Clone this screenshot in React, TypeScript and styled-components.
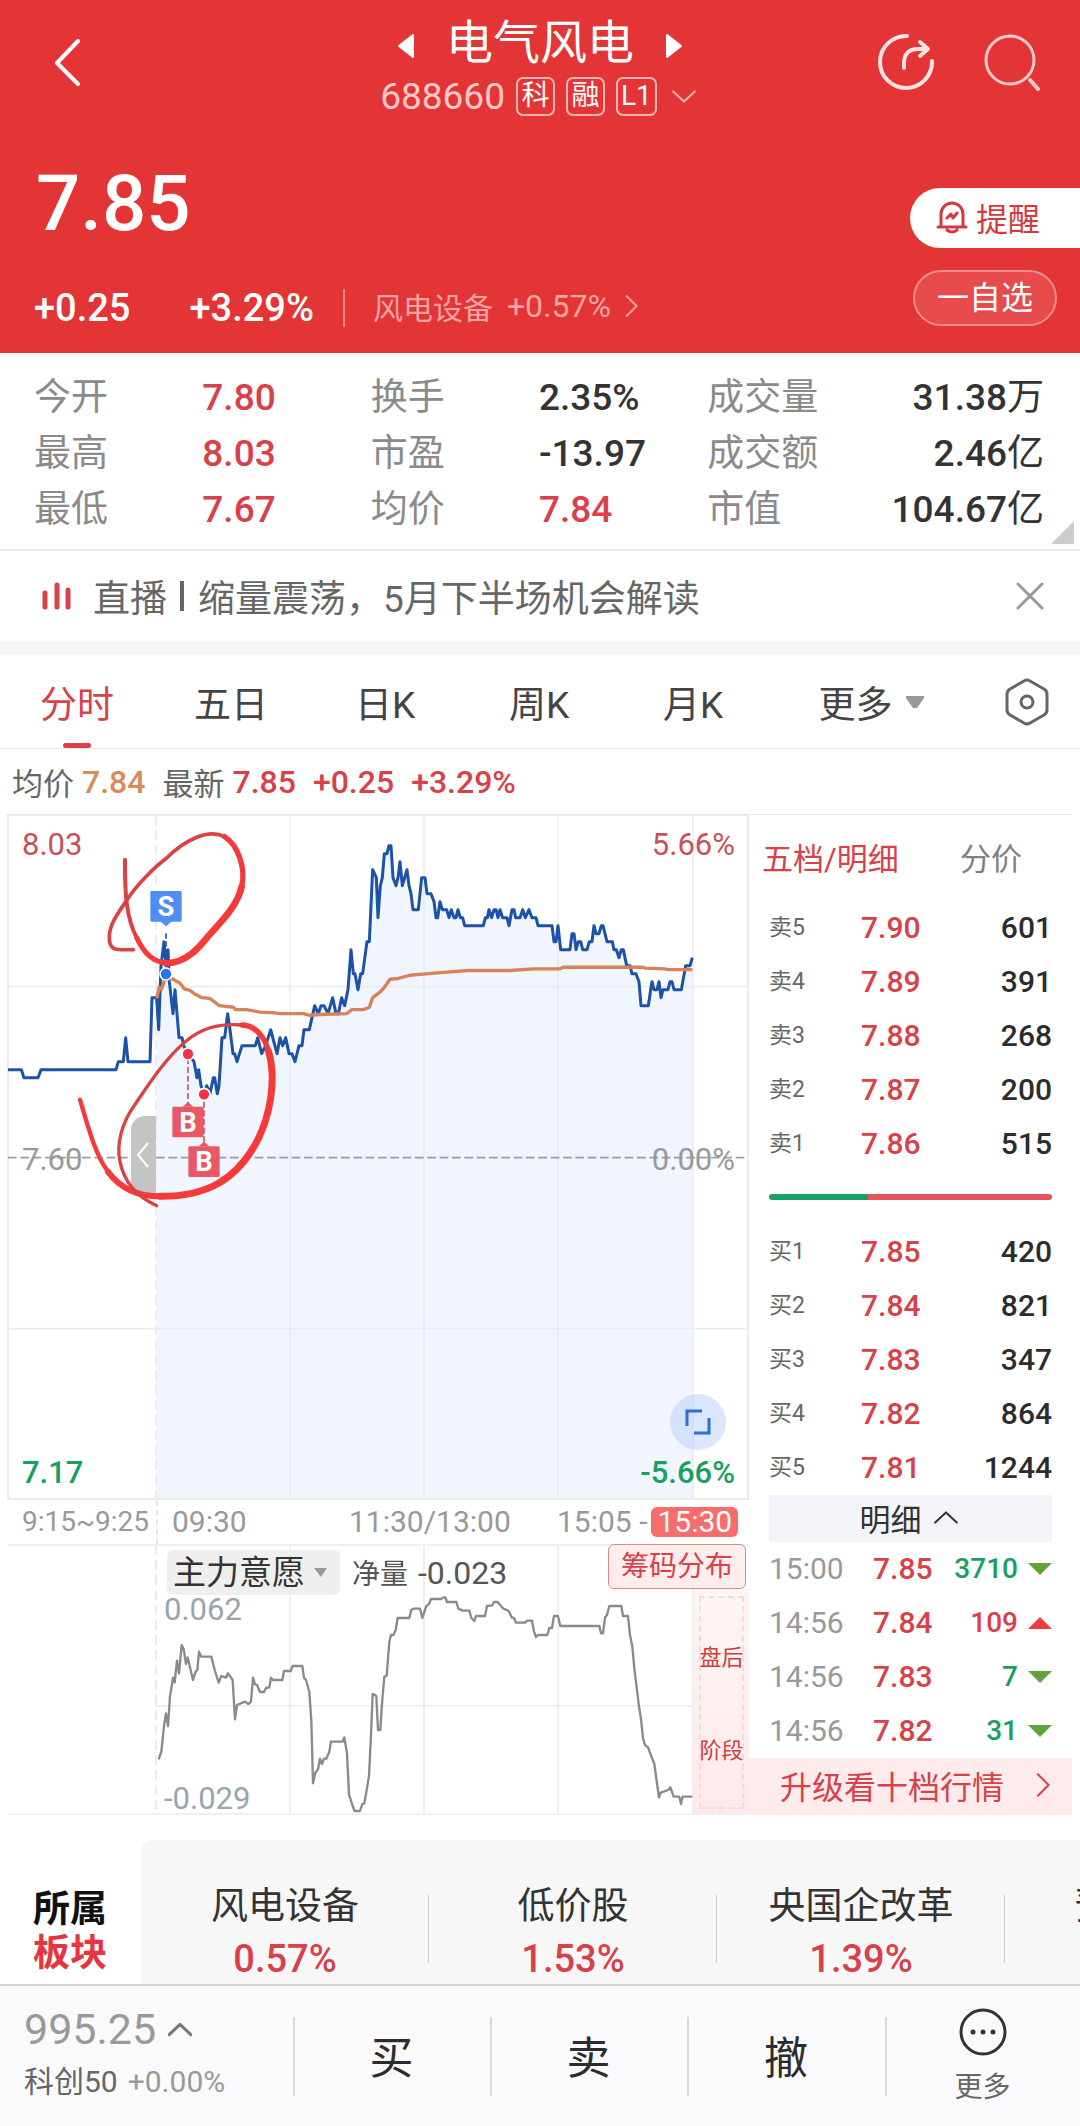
import React, { useState } from "react";
import styled, { createGlobalStyle } from "styled-components";

const RED = "#d8404a";
const GREEN = "#18a062";
const CJK = `"Noto Sans CJK SC", sans-serif`;

const Global = createGlobalStyle`
  *, *::before, *::after { box-sizing: border-box; }
  body { margin: 0; background: #fff; color: #333; font-family: Roboto, ${CJK}; }
  button, select { font: inherit; color: inherit; border: 0; background: none; padding: 0; margin: 0; }
  svg { display: block; flex: none; }
  dl, dt, dd, p, h1 { margin: 0; font-weight: 400; }
`;

/* price samples: [x, ticks above previous close], three units per pixel */
const PRICE: number[][] = [
  [0,11],[40,11],[48,10],[90,10],[99,11],[324,11],[331,12],[346,12],[353,15],[360,12],[426,12],[432,20],[446,20],
  [452,16],[459,24],[468,27],[474,24],[480,26],[484,22],[495,18],[501,21],[513,15],[522,15],[527,14],[540,13],[558,12],
  [567,10],[572,11],[579,9],[588,8],[596,9],[606,8],[616,10],[620,10],[628,8],[633,9],[642,15],[650,15],[659,18],[666,16],
  [675,13],[680,13],[687,12],[702,14],[742,14],[749,15],[761,13],[773,14],[788,16],[807,13],[816,15],[824,14],[833,15],
  [843,13],[852,13],[861,12],[873,14],[882,14],[888,16],[904,16],[920,19],[931,18],[939,19],[948,19],[960,18],[974,20],
  [984,18],[991,18],[1001,20],[1010,19],[1020,21],[1029,26],[1036,23],[1041,23],[1050,21],[1058,23],[1064,23],[1077,27],
  [1084,27],[1094,36],[1105,35],[1110,30],[1117,34],[1123,35],[1129,38],[1137,38],[1143,39],[1149,39],[1155,35],[1164,34],
  [1170,35],[1176,37],[1183,34],[1197,36],[1203,34],[1209,33],[1215,31],[1231,31],[1241,35],[1251,35],[1257,33],[1269,33],
  [1278,32],[1284,30],[1289,30],[1296,32],[1303,31],[1316,31],[1323,30],[1330,31],[1338,30],[1344,30],[1350,31],[1357,30],
  [1364,30],[1370,29],[1426,29],[1432,30],[1438,30],[1443,31],[1451,30],[1458,31],[1464,31],[1470,30],[1476,31],[1484,30],
  [1497,30],[1503,29],[1512,31],[1518,31],[1523,30],[1536,30],[1544,31],[1552,30],[1563,31],[1572,30],[1584,30],[1590,29],
  [1632,29],[1638,27],[1644,27],[1650,29],[1658,26],[1686,26],[1692,28],[1698,28],[1704,26],[1711,27],[1718,27],[1724,26],
  [1737,26],[1744,27],[1752,27],[1758,29],[1764,28],[1773,28],[1780,29],[1785,29],[1797,27],[1813,27],[1818,26],[1825,26],
  [1833,25],[1840,26],[1846,26],[1856,24],[1866,24],[1872,23],[1884,23],[1893,22],[1899,19],[1921,19],[1928,21],[1932,22],
  [1938,21],[1947,21],[1953,22],[1959,20],[1965,21],[1980,21],[1986,22],[1992,22],[1998,21],[2020,21],[2033,24],[2046,24],
  [2053,25],
];

const AVERAGE: number[][] = [
  [447,19.9],[453,21.3],[460,21],[470,22.2],[482,22.4],[496,22.3],[516,21.8],[529,21.1],[546,20.9],[559,20.5],[582,20],
  [606,19.9],[634,19],[676,18.8],[682,18.5],[716,18.5],[756,18.2],[801,18.1],[816,18],[886,18],[906,17.8],[936,17.9],
  [1016,18],[1032,18.5],[1066,18.5],[1084,18.8],[1094,20],[1116,20.7],[1129,21.3],[1146,22.3],[1171,22.4],[1206,22.8],
  [1261,23],[1316,23.2],[1381,23.4],[1506,23.4],[1576,23.6],[1656,23.6],[1666,23.8],[1904,23.8],[1911,23.7],[1971,23.6],
  [1981,23.5],[2053,23.5],
];

/* main-force indicator: [x, depth below the panel's top] */
const FORCE: number[][] = [
  [452,643],[460,620],[468,543],[474,505],[480,543],[486,455],[495,398],[500,413],[507,347],[513,385],[521,300],[527,313],
  [534,357],[539,337],[555,405],[563,380],[568,375],[573,320],[580,335],[610,335],[621,378],[632,413],[640,393],[654,398],
  [660,385],[674,405],[681,523],[687,480],[711,470],[721,477],[729,470],[735,398],[741,418],[747,420],[756,441],[768,441],
  [774,429],[784,427],[789,398],[795,405],[823,405],[828,378],[848,378],[854,363],[883,363],[888,398],[894,405],[904,441],
  [910,527],[915,715],[922,683],[930,673],[936,641],[942,657],[948,641],[955,641],[964,620],[969,590],[1004,590],[1009,577],
  [1017,625],[1023,749],[1034,783],[1040,798],[1056,798],[1063,777],[1069,775],[1077,729],[1083,693],[1089,569],[1094,447],
  [1105,453],[1110,555],[1117,555],[1122,475],[1129,395],[1136,393],[1144,290],[1149,270],[1156,270],[1163,255],[1169,219],
  [1204,219],[1210,195],[1216,191],[1236,191],[1243,219],[1255,183],[1263,177],[1269,162],[1299,162],[1306,157],[1312,157],
  [1317,171],[1345,171],[1351,191],[1364,197],[1384,197],[1390,219],[1399,228],[1404,213],[1431,213],[1437,183],[1452,181],
  [1458,171],[1469,171],[1486,191],[1502,198],[1511,217],[1518,219],[1524,233],[1551,233],[1558,227],[1572,227],[1578,260],
  [1584,276],[1590,270],[1618,270],[1624,249],[1632,249],[1638,213],[1650,213],[1657,243],[1774,243],[1779,265],[1785,265],
  [1791,217],[1797,210],[1804,183],[1840,183],[1845,213],[1860,213],[1866,270],[1873,305],[1879,370],[1893,485],[1899,522],
  [1905,580],[1911,600],[1920,607],[1939,657],[1947,715],[1953,757],[1958,743],[1981,735],[1987,727],[1997,755],[2014,755],
  [2019,777],[2024,755],[2053,755],
];

const toPoints = (rows: number[][]) => rows.map(([x, t]) => `${x},${1028 - t * 24}`).join(" ");

/* ---------- header ---------- */
const Header = styled.header`
  background: #e33536;
  color: #fff;
  padding-top: 14px;
  display: flex;
  flex-direction: column;
`;
const TopBar = styled.div`
  display: grid;
  grid-template-columns: 1fr auto 1fr;
  align-items: start;
  height: 108px;
`;
const BackButton = styled.button`
  justify-self: start;
  padding: 24px 20px 0 50px;
`;
const TitleBlock = styled.div`
  display: flex;
  flex-direction: column;
  align-items: center;
`;
const TitleRow = styled.div`
  display: flex;
  align-items: center;
  gap: 31px;
  height: 50px;
`;
const StepArrow = styled.svg`
  margin-top: 14px;
`;
const Title = styled.h1`
  font: 400 47px/50px ${CJK};
`;
const CodeRow = styled.div`
  display: flex;
  align-items: center;
  gap: 11px;
  height: 64px;
  padding-right: 4px;
  font-size: 37px;
  color: #ffc9c9;
  svg { margin-left: 4px; }
`;
const Tag = styled.span`
  min-width: 39px;
  height: 39px;
  padding: 0 3px;
  border: 2px solid #f5b5b5;
  border-radius: 7px;
  color: #fff;
  font-size: 28px;
  line-height: 34px;
  text-align: center;
`;
const TopActions = styled.div`
  justify-self: end;
  display: flex;
  gap: 47px;
  padding: 19px 40px 0 0;
`;
const PriceRow = styled.div`
  display: flex;
  justify-content: space-between;
  align-items: center;
  height: 134px;
  padding-left: 36px;
`;
const BigPrice = styled.div`
  font-size: 78px;
  line-height: 80px;
  font-weight: 500;
  padding-top: 30px;
`;
const RemindButton = styled.button`
  display: flex;
  align-items: center;
  gap: 8px;
  height: 60px;
  margin-top: 58px;
  padding: 0 40px 2px 26px;
  border-radius: 30px 0 0 30px;
  background: #fff;
  color: #d43a3d;
  font-size: 32px;
`;
const ChangeRow = styled.div`
  display: flex;
  align-items: center;
  height: 97px;
  padding: 6px 23px 0 34px;
  font-size: 38px;
  font-weight: 500;
`;
const ChangeRate = styled.span`
  padding: 0 29px 0 59px;
`;
const SectorLink = styled.a`
  display: flex;
  align-items: center;
  gap: 14px;
  height: 38px;
  padding: 0 0 4px 28px;
  border-left: 2px solid #ee8586;
  color: #f7a3a3;
  font-size: 30px;
  font-weight: 400;
  text-decoration: none;
`;
const SectorChange = styled.span`
  font-size: 32px;
`;
const WatchButton = styled.button`
  height: 56px;
  margin: -20px 0 0 auto;
  padding: 0 22px;
  border: 2px solid #f08c8d;
  border-radius: 28px;
  background: #e74b4c;
  font-size: 32px;
  font-weight: 400;
  line-height: 50px;
`;

/* ---------- stats ---------- */
const Stats = styled.dl`
  position: relative;
  display: grid;
  grid-template-columns: repeat(6, minmax(0, 1fr));
  grid-auto-rows: 56px;
  height: 198px;
  padding: 17px 36px 0 34px;
  border-bottom: 2px solid #ececec;
  white-space: nowrap;
`;
const StatLabel = styled.dt`
  font-size: 37px;
  line-height: 56px;
  color: #8a8a8a;
`;
const StatValue = styled.dd<{ $up?: boolean; $end?: boolean }>`
  font-size: 37px;
  line-height: 56px;
  font-weight: 500;
  color: ${(p) => (p.$up ? RED : "#333")};
  text-align: ${(p) => (p.$end ? "right" : "left")};
`;
const Unit = styled.span`
  font-weight: 400;
`;
const Corner = styled.span`
  position: absolute;
  right: 6px;
  bottom: 5px;
  border-style: solid;
  border-width: 0 0 23px 23px;
  border-color: transparent transparent #ccc transparent;
`;

/* ---------- notice ---------- */
const Notice = styled.section`
  display: flex;
  align-items: center;
  height: 104px;
  padding: 0 35px 0 42px;
  border-bottom: 14px solid #f7f7f7;
  color: #666;
  font-size: 37px;
`;
const NoticeTag = styled.span`
  margin: 0 13px 0 21px;
`;
const NoticeText = styled.a`
  display: flex;
  align-items: center;
  flex: 1;
  gap: 14px;
  color: inherit;
  text-decoration: none;
  white-space: nowrap;
  &::before { content: ""; width: 4px; height: 30px; background: #666; }
`;

/* ---------- period tabs ---------- */
const Tabs = styled.nav`
  display: grid;
  grid-template-columns: repeat(5, 154fr) 203fr 107fr;
  justify-items: center;
  height: 94px;
  border-bottom: 1px solid #e6e6e6;
`;
const Tab = styled.button<{ $active?: boolean }>`
  position: relative;
  display: flex;
  align-items: center;
  gap: 12px;
  font-size: 37px;
  color: ${(p) => (p.$active ? RED : "#444")};
  &::after {
    content: "";
    position: absolute;
    left: calc(50% - 14px);
    bottom: 0;
    width: 28px;
    height: 5px;
    border-radius: 3px;
    background: ${(p) => (p.$active ? RED : "transparent")};
  }
`;
const Summary = styled.div`
  display: flex;
  align-items: center;
  gap: 17px;
  height: 65px;
  padding: 0 12px;
  font-size: 32px;
  font-weight: 500;
  color: ${RED};
`;
const SummaryItem = styled.span<{ $color?: string }>`
  display: flex;
  align-items: center;
  gap: 8px;
  color: ${(p) => p.$color || RED};
`;
const SummaryLabel = styled.span`
  font-size: 31px;
  font-weight: 400;
  color: #666;
`;

/* ---------- chart ---------- */
const Board = styled.main`
  display: grid;
  grid-template-columns: minmax(0, 742fr) minmax(0, 323fr);
  padding: 0 8px 0 7px;
`;
const Charts = styled.div`
  min-width: 0;
`;
const Plot = styled.div`
  position: relative;
  svg { width: 100%; height: auto; }
`;
const Sketch = styled.svg`
  position: absolute;
  inset: 0;
  pointer-events: none;
`;
const AxisLabel = styled.span<{ $top: string; $left?: string; $right?: string; $color: string; $strong?: boolean }>`
  position: absolute;
  top: ${(p) => p.$top};
  left: ${(p) => p.$left || "auto"};
  right: ${(p) => p.$right || "auto"};
  font-size: 31px;
  line-height: 36px;
  margin-top: -18px;
  font-weight: ${(p) => (p.$strong ? 500 : 400)};
  color: ${(p) => p.$color};
`;
const FoldHandle = styled.button`
  position: absolute;
  left: 16.7%;
  top: 44%;
  width: 25px;
  height: 78px;
  border-radius: 14px 0 0 14px;
  background: #c4c4c4;
  svg { width: 14px; margin: 0 auto; }
`;
const ExpandButton = styled.button`
  position: absolute;
  right: 23px;
  bottom: 50px;
  width: 56px;
  height: 56px;
  border-radius: 50%;
  background: rgba(190, 211, 252, 0.55);
  svg { width: 28px; margin: 0 auto; }
`;
const TimeAxis = styled.div`
  display: grid;
  grid-template-columns: minmax(0, 149fr) minmax(0, 193fr) minmax(0, 208fr) minmax(0, 192fr);
  height: 44px;
  font-size: 30px;
  line-height: 44px;
  color: #999;
  white-space: nowrap;
`;
const TimeCell = styled.span<{ $pad?: number; $dashed?: boolean; $small?: boolean }>`
  padding-left: ${(p) => p.$pad || 0}px;
  border-left: ${(p) => (p.$dashed ? "2px dashed #e8e8e8" : "0")};
  font-size: ${(p) => (p.$small ? 28 : 30)}px;
`;
const Badge = styled.span`
  display: inline-block;
  margin-left: 4px;
  padding: 0 6px;
  border-radius: 6px;
  background: #f86c6c;
  color: #fff;
  line-height: 30px;
`;
const IndicatorBar = styled.div`
  position: absolute;
  inset: 0 3px auto 160px;
  display: flex;
  align-items: flex-start;
  color: #555;
`;
const SelectWrap = styled.label`
  display: flex;
  align-items: center;
  height: 45px;
  margin: 6px 12px 0 0;
  padding: 0 12px 0 6px;
  gap: 8px;
  border-radius: 6px;
  background: #efefef;
  color: #333;
  svg { width: 15px; }
`;
const Select = styled.select`
  appearance: none;
  height: 45px;
  font-size: 33px;
  outline: 0;
`;
const NetAmount = styled.span`
  font-size: 28px;
  line-height: 58px;
  b { font-size: 32px; font-weight: 400; padding-left: 10px; }
`;
const ChipButton = styled.button`
  margin-left: auto;
  height: 45px;
  width: 138px;
  border: 1px solid #d98a8c;
  border-radius: 6px;
  background: #ffedee;
  color: ${RED};
  font-size: 28px;
  line-height: 43px;
`;
const AfterHours = styled.div`
  position: absolute;
  right: 0;
  top: 45px;
  bottom: 1px;
  width: 7.4%;
  padding: 7px 5px 5px 5px;
  background: linear-gradient(#fff5f5, #ffe9ea);
`;
const AfterHoursInner = styled.div`
  display: flex;
  flex-direction: column;
  align-items: center;
  justify-content: space-around;
  height: 100%;
  padding: 10px 0 12px;
  border: 2px dashed #f7d9da;
  color: #c9403f;
  font-size: 22px;
  white-space: nowrap;
`;

/* ---------- order book ---------- */
const Side = styled.aside`
  min-width: 0;
  border-top: 1px solid #e6e6e6;
  display: flex;
  flex-direction: column;
`;
const BookTabs = styled.div`
  display: flex;
  justify-content: space-between;
  height: 86px;
  padding: 0 50px 4px 13px;
`;
const BookTab = styled.button<{ $active?: boolean }>`
  font-size: 31px;
  color: ${(p) => (p.$active ? RED : "#808080")};
`;
const Table = styled.table`
  border-collapse: collapse;
  table-layout: fixed;
  width: calc(100% - 40px);
  margin: 0 20px;
  td, th { height: 54px; padding: 0; font-size: 30px; line-height: 54px; font-weight: 500; text-align: left; }
`;
const LevelName = styled.th`
  width: 92px;
  && { font-size: 23px; font-weight: 400; color: #666; }
`;
const PriceCell = styled.td`
  color: ${RED};
`;
const AmountCell = styled.td<{ $color?: string; $small?: boolean }>`
  && { text-align: right; font-size: ${(p) => (p.$small ? 28 : 30)}px; }
  color: ${(p) => p.$color || "#2c2c2c"};
`;
const TimeHead = styled.th`
  width: 104px;
  && { font-weight: 400; color: #999; }
`;
const TrendCell = styled.td`
  width: 34px;
  svg { margin-left: auto; }
`;
const Ratio = styled.div`
  height: 54px;
  margin: 0 20px;
  padding-bottom: 2px;
  display: flex;
  align-items: center;
`;
const RatioPart = styled.span<{ $color: string; $grow: number }>`
  flex: ${(p) => p.$grow};
  height: 6px;
  background: ${(p) => p.$color};
  &:first-child { border-radius: 3px 0 0 3px; }
  &:last-child { border-radius: 0 3px 3px 0; }
`;
const DetailButton = styled.button`
  display: flex;
  align-items: center;
  justify-content: center;
  gap: 12px;
  height: 47px;
  margin: 0 20px;
  padding: 0 4px 2px 0;
  background: #f3f4f9;
  font-size: 31px;
`;
const Upgrade = styled.a`
  display: flex;
  align-items: center;
  justify-content: space-between;
  flex: 1;
  padding: 0 21px 4px 31px;
  background: #ffebec;
  color: ${RED};
  font-size: 32px;
  text-decoration: none;
  white-space: nowrap;
`;

/* ---------- sectors ---------- */
const Sectors = styled.section`
  display: flex;
  height: 144px;
  margin-top: 25px;
  overflow: hidden;
`;
const SectorHead = styled.div`
  flex: none;
  width: 141px;
  padding: 44px 0 0 33px;
  font: 700 37px/44px ${CJK};
  color: #111;
  span { display: block; color: #e63440; }
`;
const SectorList = styled.div`
  flex: 1;
  min-width: 0;
  display: flex;
  overflow: hidden;
  border-radius: 12px 0 0 0;
  background: #f7f7f7;
`;
const SectorItem = styled.a`
  position: relative;
  flex: none;
  width: 288px;
  padding-top: 40px;
  text-align: center;
  text-decoration: none;
  color: #333;
  font-size: 37px;
  line-height: 53px;
  &::after {
    content: "";
    position: absolute;
    right: 0;
    top: 55px;
    height: 68px;
    border-right: 1px solid #ccc;
  }
`;
const SectorRate = styled.span`
  display: block;
  color: ${RED};
  font-size: 38px;
  font-weight: 500;
`;

/* ---------- bottom bar ---------- */
const BottomBar = styled.footer`
  display: grid;
  grid-template-columns: 293fr 197fr 197fr 198fr 195fr;
  height: 142px;
  border-top: 2px solid #d6d6d8;
  background: #fafafc;
`;
const IndexButton = styled.button`
  padding: 4px 0 14px 24px;
  text-align: left;
  color: #999;
  font-size: 30px;
  line-height: 44px;
  white-space: nowrap;
`;
const IndexValue = styled.span`
  display: flex;
  align-items: center;
  gap: 12px;
  height: 62px;
  font-size: 43px;
`;
const IndexName = styled.span`
  color: #666;
  padding-right: 10px;
`;
const Action = styled.button`
  position: relative;
  padding-bottom: 2px;
  font-size: 44px;
  color: #2c2c2c;
  &::before {
    content: "";
    position: absolute;
    left: 0;
    top: 31px;
    height: 79px;
    border-left: 2px solid #d9d9db;
  }
`;
const MoreAction = styled(Action)`
  display: flex;
  flex-direction: column;
  align-items: center;
  padding-top: 22px;
  gap: 11px;
  font-size: 28px;
  line-height: 42px;
  color: #666;
`;

const Chevron = ({ dir, size, color, weight = 3 }: { dir: "left" | "right" | "up" | "down"; size: number; color: string; weight?: number }) => {
  const d = { left: "M18 2 7 20l11 18", right: "M3 2l18 18L3 38", up: "M2 21 20 4l18 17", down: "M2 4l18 17L38 4" }[dir];
  const tall = dir === "left" || dir === "right";
  return (
    <svg width={tall ? size * 0.625 : size} height={tall ? size : size * 0.625} viewBox={tall ? "0 0 25 40" : "0 0 40 25"} fill="none" stroke={color} strokeWidth={(weight * 40) / size} strokeLinecap="round" strokeLinejoin="round">
      <path d={d} />
    </svg>
  );
};

const stats: { label: string; value: string; unit?: string; up?: boolean; end?: boolean }[] = [
  { label: "今开", value: "7.80", up: true },
  { label: "换手", value: "2.35%" },
  { label: "成交量", value: "31.38", unit: "万", end: true },
  { label: "最高", value: "8.03", up: true },
  { label: "市盈", value: "-13.97" },
  { label: "成交额", value: "2.46", unit: "亿", end: true },
  { label: "最低", value: "7.67", up: true },
  { label: "均价", value: "7.84", up: true },
  { label: "市值", value: "104.67", unit: "亿", end: true },
];
const sells = [["卖5", "7.90", "601"], ["卖4", "7.89", "391"], ["卖3", "7.88", "268"], ["卖2", "7.87", "200"], ["卖1", "7.86", "515"]];
const buys = [["买1", "7.85", "420"], ["买2", "7.84", "821"], ["买3", "7.83", "347"], ["买4", "7.82", "864"], ["买5", "7.81", "1244"]];
const trades: [string, string, string, boolean][] = [
  ["15:00", "7.85", "3710", false],
  ["14:56", "7.84", "109", true],
  ["14:56", "7.83", "7", false],
  ["14:56", "7.82", "31", false],
];

const Levels = ({ rows }: { rows: string[][] }) => (
  <Table>
    <tbody>
      {rows.map(([name, price, amount]) => (
        <tr key={name}>
          <LevelName scope="row">{name}</LevelName>
          <PriceCell>{price}</PriceCell>
          <AmountCell>{amount}</AmountCell>
        </tr>
      ))}
    </tbody>
  </Table>
);

const Marker = ({ x, y, letter, color, up }: { x: number; y: number; letter: string; color: string; up?: boolean }) => (
  <g>
    <path d={up ? `M${x - 16} ${y}l16-14 16 14z` : `M${x - 18} ${y + 91}l18 15 18-15z`} fill={color} />
    <rect x={x - 47} y={y} width="94" height="92" rx="4" fill={color} />
    <text x={x} y={y + 75} textAnchor="middle" fontFamily="Roboto, sans-serif" fontWeight="700" fontSize="82" fill="#fff">{letter}</text>
  </g>
);

const PriceChart = () => (
  <Plot>
    <svg viewBox="-3 -3 2226 2058" aria-label="分时走势">
      <polygon points={`444,2052 ${toPoints(PRICE.filter(([x]) => x >= 446))} 2055,2052`} fill="#f0f5fe" />
      <g stroke="#e6e8ee" strokeOpacity=".8" strokeWidth="5" fill="none">
        <path d="M846 0V2052M1248 0V2052M1650 0V2052M2055 0V2052M0 515H2220M0 1541H2220" />
        <path d="M444 0V2052" strokeDasharray="30 15" strokeWidth="6" />
      </g>
      <rect width="2220" height="2052" fill="none" stroke="#ebebeb" strokeWidth="6" />
      <path d="M0 1028H2220" stroke="#9a9da3" strokeWidth="5" strokeDasharray="26 11" />
      <polyline points={toPoints(PRICE)} fill="none" stroke="#1c52a8" strokeWidth="9" strokeLinejoin="round" />
      <polyline points={toPoints(AVERAGE)} fill="none" stroke="#d9825a" strokeWidth="10" strokeLinejoin="round" />
      <path d="M474 355V465" stroke="#1c52a8" strokeWidth="5" strokeDasharray="16 8" />
      <path d="M540 730V870M588 860V990" stroke="#c9566a" strokeWidth="5" strokeDasharray="18 8" />
      <g stroke="#fff" strokeWidth="5">
        <circle cx="474" cy="477" r="18" fill="#2277f2" />
        <circle cx="540" cy="717" r="18" fill="#ee3444" />
        <circle cx="588" cy="838" r="18" fill="#ee3444" />
      </g>
      <Marker x={474} y={228} letter="S" color="#4f8df5" />
      <Marker x={540} y={875} letter="B" color="#ea5865" up />
      <Marker x={588} y={994} letter="B" color="#ea5865" up />
    </svg>
    <AxisLabel $top="4.5%" $left="15px" $color="#c8505a">8.03</AxisLabel>
    <AxisLabel $top="4.5%" $right="14px" $color="#c8505a">5.66%</AxisLabel>
    <AxisLabel $top="50.5%" $left="15px" $color="#999">7.60</AxisLabel>
    <AxisLabel $top="50.5%" $right="14px" $color="#999">0.00%</AxisLabel>
    <AxisLabel $top="96%" $left="15px" $color={GREEN} $strong>7.17</AxisLabel>
    <AxisLabel $top="96%" $right="14px" $color={GREEN} $strong>-5.66%</AxisLabel>
    <FoldHandle aria-label="收起集合竞价">
      <svg viewBox="0 0 14 28" fill="none" stroke="#fff" strokeWidth="2"><path d="M12 2 2 14l10 12" /></svg>
    </FoldHandle>
    <ExpandButton aria-label="全屏">
      <svg viewBox="0 0 28 28" fill="none" stroke="#2d6fd6" strokeWidth="3"><path d="M3 18V3h15M25 10v15H10" /></svg>
    </ExpandButton>
    <Sketch viewBox="-3 -3 2226 2058" fill="none" stroke="#f63a3a" strokeLinecap="round" aria-hidden="true">
      <path strokeWidth="12" stroke="#dc4242" d="M351 134C350 240 356 310 386 368" />
      <path strokeWidth="15" d="M386 368C410 420 440 442 474 444" />
      <path strokeWidth="20" d="M474 444C530 446 570 402 600 364C640 320 690 270 701 215" />
      <path strokeWidth="16" d="M701 215C714 160 690 90 650 65" />
      <path strokeWidth="11" stroke="#dc4242" d="M650 65C600 40 530 75 476 129C440 156 390 205 360 250C330 295 305 325 304 365C302 410 326 404 376 404" />
      <path strokeWidth="13" d="M216 854C240 935 262 1020 300 1070" />
      <path strokeWidth="18" d="M300 1070C340 1125 400 1144 456 1144" />
      <path strokeWidth="21" d="M456 1144C600 1145 680 1090 735 1000C790 910 805 790 782 710" />
      <path strokeWidth="16" d="M782 710C770 665 740 630 702 630" />
      <path strokeWidth="10" stroke="#dc4242" d="M702 630C600 622 550 660 510 700C460 750 420 810 380 870C340 925 325 990 336 1040C346 1090 375 1140 446 1172" />
    </Sketch>
  </Plot>
);

const ForceChart = () => (
  <Plot>
    <svg viewBox="-3 -3 2226 813" aria-label="主力意愿走势">
      <g stroke="#ececec" strokeWidth="5" fill="none">
        <path d="M0 0H2220M0 807H2220M846 0V807M1248 0V807M1650 0V807M2055 0V807M444 483H2055" />
        <path d="M444 0V807" strokeDasharray="30 15" strokeWidth="6" />
      </g>
      <polyline points={FORCE.map((p) => p.join(",")).join(" ")} fill="none" stroke="#8a8a8a" strokeWidth="7" strokeLinejoin="round" />
    </svg>
    <AfterHours>
      <AfterHoursInner><span>盘后</span><span>阶段</span></AfterHoursInner>
    </AfterHours>
    <AxisLabel $top="24.5%" $left="157px" $color="#98a5ae">0.062</AxisLabel>
    <AxisLabel $top="94%" $left="157px" $color="#98a5ae">-0.029</AxisLabel>
    <IndicatorBar>
      <SelectWrap>
        <Select aria-label="指标" defaultValue="主力意愿"><option>主力意愿</option></Select>
        <svg viewBox="0 0 15 11"><path d="M1 1h13L8 10z" fill="#999" /></svg>
      </SelectWrap>
      <NetAmount>净量<b>-0.023</b></NetAmount>
      <ChipButton>筹码分布</ChipButton>
    </IndicatorBar>
  </Plot>
);

export default function App() {
  const [period, setPeriod] = useState("分时");
  return (
    <>
      <Global />
      <Header>
        <TopBar>
          <BackButton aria-label="返回">
            <svg width="34" height="48" viewBox="0 0 34 48" fill="none" stroke="#fff" strokeWidth="4" strokeLinecap="round" strokeLinejoin="round"><path d="M28 3 7 25l21 21" /></svg>
          </BackButton>
          <TitleBlock>
            <TitleRow>
              <StepArrow width="18" height="26" viewBox="0 0 18 26"><path d="M16 2v22L2 13z" fill="#fff" stroke="#fff" strokeWidth="2" strokeLinejoin="round" /></StepArrow>
              <Title>电气风电</Title>
              <StepArrow width="18" height="26" viewBox="0 0 18 26"><path d="M2 2v22l14-11z" fill="#fff" stroke="#fff" strokeWidth="2" strokeLinejoin="round" /></StepArrow>
            </TitleRow>
            <CodeRow>
              688660<Tag>科</Tag><Tag>融</Tag><Tag>L1</Tag>
              <Chevron dir="down" size={24} color="#f7b0b0" weight={2} />
            </CodeRow>
          </TitleBlock>
          <TopActions>
            <button aria-label="分享">
              <svg width="58" height="58" viewBox="0 0 58 58" fill="none" stroke="#ffe3e3" strokeWidth="4" strokeLinecap="round" strokeLinejoin="round">
                <path d="M30 3a26 26 0 1 0 25 25M27 35v-5c0-9 5-14 14-14h9M43 9l8 7-8 7" />
              </svg>
            </button>
            <button aria-label="搜索">
              <svg width="58" height="58" viewBox="0 0 58 58" fill="none" stroke="#ffc9c9" strokeWidth="3" strokeLinecap="round">
                <circle cx="28" cy="27" r="24" /><path strokeWidth="4" d="M48 47l8 9" />
              </svg>
            </button>
          </TopActions>
        </TopBar>
        <PriceRow>
          <BigPrice>7.85</BigPrice>
          <RemindButton>
            <svg width="32" height="34" viewBox="0 0 32 34" fill="none" stroke="#d43a3d" strokeWidth="3" strokeLinejoin="round" strokeLinecap="round">
              <path d="M2 27h28M5 26V14a11 11 0 0 1 22 0v12M11 30q5 4 10 0M11 18l4-4 2 4 4-5" />
            </svg>
            提醒
          </RemindButton>
        </PriceRow>
        <ChangeRow>
          <span>+0.25</span>
          <ChangeRate>+3.29%</ChangeRate>
          <SectorLink href="#sector">
            <span>风电设备</span><SectorChange>+0.57%</SectorChange>
            <Chevron dir="right" size={22} color="#f7a3a3" weight={2} />
          </SectorLink>
          <WatchButton>一自选</WatchButton>
        </ChangeRow>
      </Header>

      <Stats>
        {stats.map((s) => (
          <React.Fragment key={s.label}>
            <StatLabel>{s.label}</StatLabel>
            <StatValue $up={s.up} $end={s.end}>{s.value}{s.unit && <Unit>{s.unit}</Unit>}</StatValue>
          </React.Fragment>
        ))}
        <Corner />
      </Stats>

      <Notice>
        <svg width="30" height="30" viewBox="0 0 30 30" stroke="#d8404a" strokeWidth="5" strokeLinecap="round"><path d="M3 12v14M15 4v22M26 9v17" /></svg>
        <NoticeTag>直播</NoticeTag>
        <NoticeText href="#live">缩量震荡，5月下半场机会解读</NoticeText>
        <button aria-label="关闭">
          <svg width="30" height="30" viewBox="0 0 30 30" stroke="#999" strokeWidth="3" strokeLinecap="round"><path d="M3 3l24 24M27 3 3 27" /></svg>
        </button>
      </Notice>

      <Tabs>
        {["分时", "五日", "日K", "周K", "月K"].map((name) => (
          <Tab key={name} $active={name === period} onClick={() => setPeriod(name)}>{name}</Tab>
        ))}
        <Tab>
          更多
          <svg width="20" height="14" viewBox="0 0 20 14"><path d="M1 1h18v2l-7 10H8L1 3z" fill="#999" /></svg>
        </Tab>
        <button aria-label="设置">
          <svg width="44" height="48" viewBox="0 0 44 48" fill="none" stroke="#666" strokeWidth="3" strokeLinejoin="round">
            <path d="M19 3q3-2 6 0l14 8q3 2 3 5v16q0 3-3 5l-14 8q-3 2-6 0L5 37q-3-2-3-5V16q0-3 3-5z" /><circle cx="22" cy="24" r="6" />
          </svg>
        </button>
      </Tabs>
      <Summary>
        <SummaryItem $color="#d98a5a"><SummaryLabel>均价</SummaryLabel>7.84</SummaryItem>
        <SummaryItem><SummaryLabel>最新</SummaryLabel>7.85</SummaryItem>
        <span>+0.25</span>
        <span>+3.29%</span>
      </Summary>

      <Board>
        <Charts>
          <PriceChart />
          <TimeAxis>
            <TimeCell $pad={15} $small>9:15~9:25</TimeCell>
            <TimeCell $pad={14} $dashed>09:30</TimeCell>
            <TimeCell>11:30/13:00</TimeCell>
            <TimeCell>15:05 -<Badge>15:30</Badge></TimeCell>
          </TimeAxis>
          <ForceChart />
        </Charts>
        <Side>
          <BookTabs>
            <BookTab $active>五档/明细</BookTab>
            <BookTab>分价</BookTab>
          </BookTabs>
          <Levels rows={sells} />
          <Ratio><RatioPart $color="#18a062" $grow={35} /><RatioPart $color="#e5535b" $grow={65} /></Ratio>
          <Levels rows={buys} />
          <DetailButton>明细<Chevron dir="up" size={24} color="#333" weight={2} /></DetailButton>
          <Table>
            <tbody>
              {trades.map(([time, price, amount, up]) => (
                <tr key={price}>
                  <TimeHead scope="row">{time}</TimeHead>
                  <PriceCell>{price}</PriceCell>
                  <AmountCell $small $color={up ? RED : GREEN}>{amount}</AmountCell>
                  <TrendCell>
                    <svg width="24" height="14" viewBox="0 0 24 14"><path d={up ? "M0 13 12 1l12 12z" : "M0 1h24L12 13z"} fill={up ? "#f03c3c" : "#5fa33c"} /></svg>
                  </TrendCell>
                </tr>
              ))}
            </tbody>
          </Table>
          <Upgrade href="#level2">升级看十档行情<Chevron dir="right" size={24} color={RED} weight={2} /></Upgrade>
        </Side>
      </Board>

      <Sectors>
        <SectorHead>所属<span>板块</span></SectorHead>
        <SectorList>
          {[["风电设备", "0.57%"], ["低价股", "1.53%"], ["央国企改革", "1.39%"]].map(([name, rate]) => (
            <SectorItem key={name} href="#sector">{name}<SectorRate>{rate}</SectorRate></SectorItem>
          ))}
          <SectorItem href="#sector">预亏预减</SectorItem>
        </SectorList>
      </Sectors>

      <BottomBar>
        <IndexButton>
          <IndexValue>995.25<Chevron dir="up" size={24} color="#777" weight={3} /></IndexValue>
          <IndexName>科创50</IndexName>+0.00%
        </IndexButton>
        <Action>买</Action>
        <Action>卖</Action>
        <Action>撤</Action>
        <MoreAction>
          <svg width="48" height="48" viewBox="0 0 48 48" fill="none" stroke="#333" strokeWidth="3">
            <circle cx="24" cy="24" r="22" />
            <g fill="#333" stroke="none"><circle cx="14" cy="24" r="2.5" /><circle cx="24" cy="24" r="2.5" /><circle cx="34" cy="24" r="2.5" /></g>
          </svg>
          更多
        </MoreAction>
      </BottomBar>
    </>
  );
}
